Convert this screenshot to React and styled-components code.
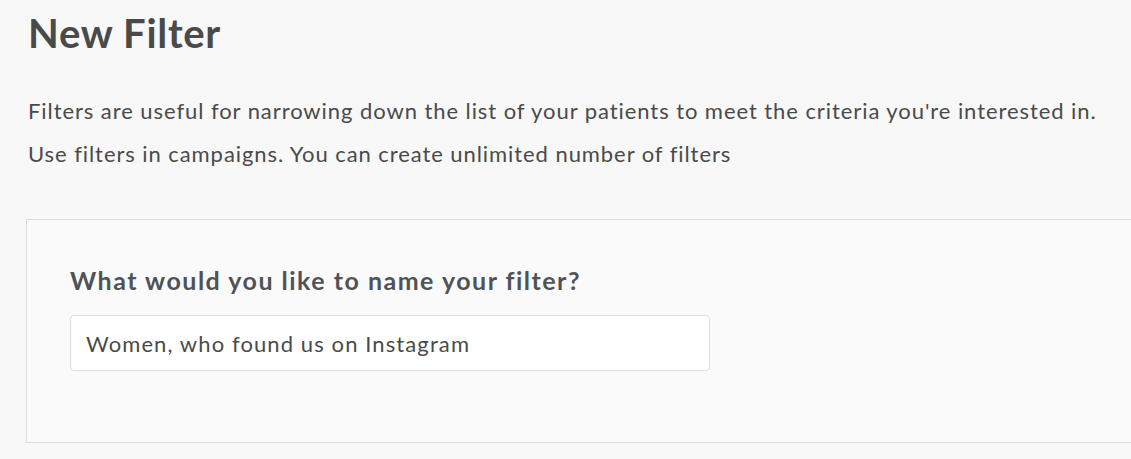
import React, { useState } from 'react';
import styled, { createGlobalStyle } from 'styled-components';

const GlobalStyle = createGlobalStyle`
  body {
    margin: 0;
    background: #f8f8f8;
    font-family: Lato, "Noto Sans", sans-serif;
    color: #4a4a4a;
  }
`;

const Page = styled.div`
  padding: 10px 0 0 26px;
  overflow: hidden;
`;

const Title = styled.h1`
  margin: 0 0 0 2px;
  font-size: 40px;
  font-weight: 700;
  line-height: 46px;
  letter-spacing: 0.7px;
  color: #4a4a4a;
`;

const Intro = styled.p`
  margin: 33px 0 0 2px;
  font-size: 22px;
  line-height: 43px;
  letter-spacing: 0.93px;
  color: #4a4a4a;
`;

const Card = styled.section`
  margin-top: 44px;
  width: 1200px;
  height: 224px;
  box-sizing: border-box;
  border: 1px solid #dddddd;
  background: #fafafa;
  padding: 45px 0 0 43px;
`;

const Label = styled.label`
  display: block;
  font-size: 25px;
  line-height: 30px;
  font-weight: 700;
  letter-spacing: 1.5px;
  color: #4f5358;
  margin-bottom: 20px;
`;

const NameInput = styled.input`
  display: block;
  box-sizing: border-box;
  width: 640px;
  height: 56px;
  padding: 0 15px;
  border: 1px solid #dddddd;
  border-radius: 4px;
  background: #ffffff;
  font-family: Lato, "Noto Sans", sans-serif;
  font-size: 22px;
  letter-spacing: 1.1px;
  color: #4a4a4a;
  outline: none;
`;

export default function App() {
  const [name, setName] = useState('Women, who found us on Instagram');

  return (
    <Page>
      <GlobalStyle />
      <Title>New Filter</Title>
      <Intro>
        Filters are useful for narrowing down the list of your patients to meet the criteria you're interested in.
        <br />
        Use filters in campaigns. You can create unlimited number of filters
      </Intro>
      <Card>
        <Label htmlFor="filter-name">What would you like to name your filter?</Label>
        <NameInput id="filter-name" value={name} onChange={(e) => setName(e.target.value)} />
      </Card>
    </Page>
  );
}
